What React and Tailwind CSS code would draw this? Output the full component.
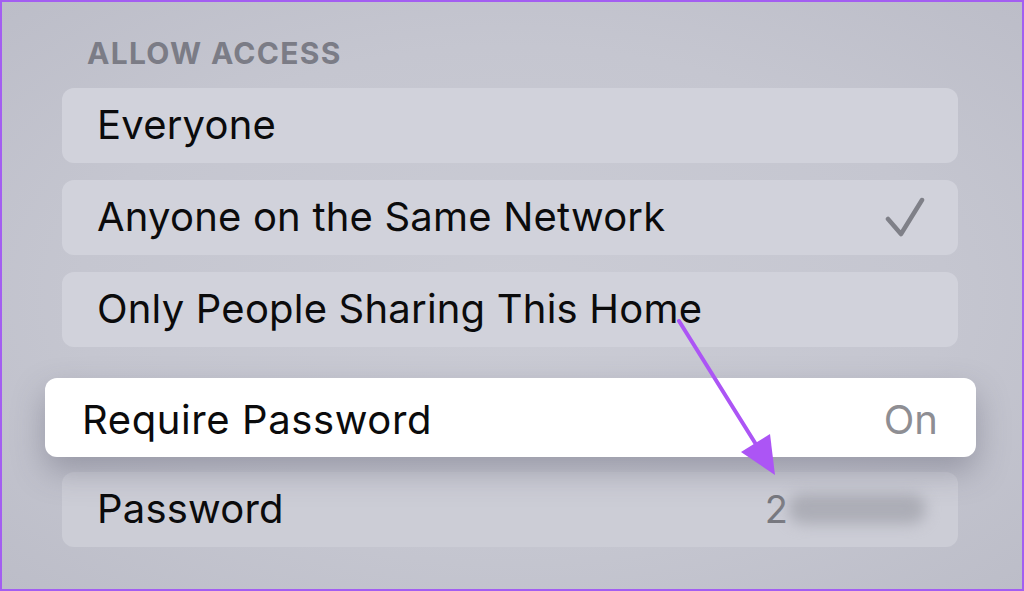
import React from "react";

const font = { fontFamily: "Inter, 'Noto Sans', 'Liberation Sans', sans-serif" };

function Row({ label, children }) {
  return (
    <div className="w-[896px] h-[75px] rounded-[12px] bg-[#d1d2db] flex items-center justify-between pl-[35px] pr-[35px] pb-[2px]">
      <span className="text-[40px] leading-none tracking-[0.2px] text-[#0b0b0c]">{label}</span>
      {children}
    </div>
  );
}

export default function App() {
  return (
    <div
      style={font}
      className="relative w-[1024px] h-[591px] overflow-hidden border-2 border-[#a35ef1] bg-[radial-gradient(ellipse_at_center,#cbccd5_0%,#c5c6d0_60%,#bcbdc8_100%)]"
    >
      <div className="flex flex-col pl-[60px] pt-[35px]">
        <div className="pl-[25px] text-[30px] leading-[32px] font-bold tracking-[1.3px] text-[#7b7c86]">
          ALLOW ACCESS
        </div>

        <div className="mt-[19px] flex flex-col gap-[17px]">
          <Row label="Everyone" />
          <Row label="Anyone on the Same Network">
            <svg width="40" height="40" viewBox="0 0 40 40" className="-mr-[2px]">
              <polyline
                points="3,22 16,37 37,3"
                fill="none"
                stroke="#7f8088"
                strokeWidth="4.5"
                strokeLinecap="round"
                strokeLinejoin="round"
              />
            </svg>
          </Row>
          <Row label="Only People Sharing This Home" />
        </div>

        <div className="relative z-10 mt-[31px] -ml-[17px] w-[931px] h-[79px] rounded-[12px] bg-white shadow-[0_14px_32px_rgba(70,70,90,0.35)] flex items-center justify-between pl-[37px] pr-[38px] pt-[4px]">
          <span className="text-[40px] leading-none tracking-[0.6px] text-[#0b0b0c]">Require Password</span>
          <span className="text-[40px] leading-none text-[#8e8e93]">On</span>
        </div>

        <div className="mt-[15px] w-[896px] h-[75px] rounded-[12px] bg-[#cccdd6] flex items-center justify-between pl-[35px] pr-[32px] pb-[2px]">
          <span className="text-[40px] leading-none tracking-[0.2px] text-[#0b0b0c]">Password</span>
          <div className="flex items-center">
            <span className="text-[38px] leading-none text-[#77787f]">2</span>
            <span className="w-[138px] h-[30px] rounded-full bg-[#acadb6] blur-[7px]" />
          </div>
        </div>
      </div>

      <svg
        className="absolute left-0 top-0 pointer-events-none z-20"
        width="1024"
        height="591"
        viewBox="0 0 1024 591"
      >
        <line x1="677" y1="319" x2="760" y2="452" stroke="#ac55f5" strokeWidth="4" strokeLinecap="round" />
        <polygon points="773,473 739,450 768,432" fill="#ac55f5" />
      </svg>
    </div>
  );
}
